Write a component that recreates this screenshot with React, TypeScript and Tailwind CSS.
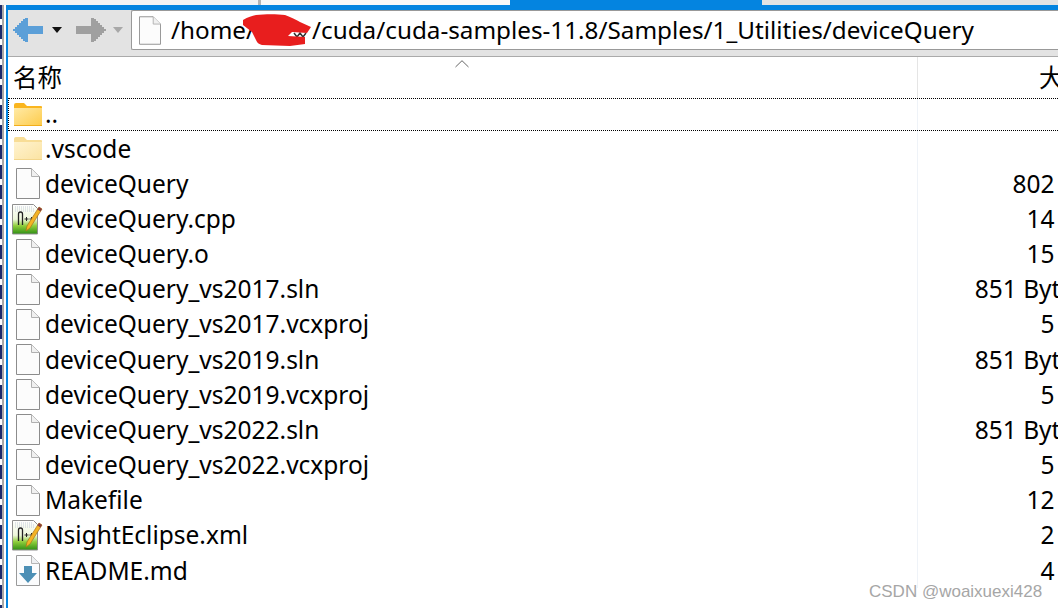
const UI_FONT = "font-['Noto_Sans','Noto_Sans_CJK_SC',sans-serif]";

type Row = { name: string; size?: string; icon: "up" | "folder" | "file" | "npp" | "readme" };

const rows: Row[] = [
  { name: ".vscode", icon: "folder" },
  { name: "deviceQuery", size: "802 KB", icon: "file" },
  { name: "deviceQuery.cpp", size: "14 KB", icon: "npp" },
  { name: "deviceQuery.o", size: "15 KB", icon: "file" },
  { name: "deviceQuery_vs2017.sln", size: "851 Bytes", icon: "file" },
  { name: "deviceQuery_vs2017.vcxproj", size: "5 KB", icon: "file" },
  { name: "deviceQuery_vs2019.sln", size: "851 Bytes", icon: "file" },
  { name: "deviceQuery_vs2019.vcxproj", size: "5 KB", icon: "file" },
  { name: "deviceQuery_vs2022.sln", size: "851 Bytes", icon: "file" },
  { name: "deviceQuery_vs2022.vcxproj", size: "5 KB", icon: "file" },
  { name: "Makefile", size: "12 KB", icon: "file" },
  { name: "NsightEclipse.xml", size: "2 KB", icon: "npp" },
  { name: "README.md", size: "4 KB", icon: "readme" },
];

function PixelArrow({ color, flip }: { color: string; flip?: boolean }) {
  return (
    <svg width="30" height="24" viewBox="0 0 30 24" shapeRendering="crispEdges" className={flip ? "-scale-x-100" : ""}>
      <path
        d="M0 11h2v-2h2v-2h2v-2h2v-2h2v-2h2v-1h3v8h15v8h-15v8h-3v-1h-2v-2h-2v-2h-2v-2h-2v-2h-2v-2h-2z"
        fill={color}
      />
    </svg>
  );
}

function Caret({ color }: { color: string }) {
  return (
    <svg width="10" height="6" viewBox="0 0 10 6">
      <path d="M0 0h10L5 6z" fill={color} />
    </svg>
  );
}

function PageIcon({ small }: { small?: boolean }) {
  return (
    <svg width={small ? 22 : 24} height={small ? 29 : 31} viewBox="0 0 24 31">
      <path d="M.5.5h15l8 8v22H.5z" fill="#fcfcfc" stroke="#8c8c8c" />
      <path d="M15.500.5v8h8" fill="#f0f0f0" stroke="#b0b0b0" />
    </svg>
  );
}

function FolderIcon({ light }: { light?: boolean }) {
  const id = light ? "folderLight" : "folderDark";
  return (
    <svg width="29" height="23" viewBox="0 0 29 23">
      <defs>
        <linearGradient id={id} x1="0" y1="0" x2="1" y2="1">
          <stop offset="0" stopColor={light ? "#fff3cf" : "#ffeaa6"} />
          <stop offset="1" stopColor={light ? "#fbe3a2" : "#fdcb4a"} />
        </linearGradient>
      </defs>
      <path d="M0 2q0-2 2-2h8l3 3h14q1 0 1 1v3H0z" fill={light ? "#f8dd96" : "#fab51e"} />
      <path d="M0 5h28v17q0 1-1 1H1q-1 0-1-1z" fill={`url(#${id})`} />
      <path d="M0 22h28v1H0z" fill={light ? "#f3d68c" : "#f2ae1c"} />
    </svg>
  );
}

function NppIcon() {
  return (
    <svg width="32" height="32" viewBox="0 0 32 32">
      <defs>
        <linearGradient id="nppGreen" x1="0" y1="0" x2="0" y2="1">
          <stop offset="0" stopColor="#ffffff" />
          <stop offset="0.5" stopColor="#eef7dc" />
          <stop offset="0.72" stopColor="#8fce3c" />
          <stop offset="1" stopColor="#2f8f14" />
        </linearGradient>
      </defs>
      <path d="M.5 1.500h21l4 4v25.500H.5z" fill="url(#nppGreen)" stroke="#8f8f8f" />
      <path d="M3 4h18M3 6h20M3 8h20" stroke="#c4ccd8" strokeDasharray="1 1" />
      <path d="M6.500 22v-11q0-2 2-2t2 2v11" fill="none" stroke="#222" strokeWidth="1.300" />
      <path d="M12.500 16h4m-2-2v4M17.500 16h4m-2-2v4" stroke="#222" />
      <path d="M27 4l3 2-12 19-4 3 1-5z" fill="#f4b324" stroke="#a8741a" strokeWidth=".7" />
      <path d="M27 4l3 2-1.500 2.500-3-2z" fill="#8a3d3d" />
    </svg>
  );
}

function ReadmeIcon() {
  return (
    <svg width="24" height="31" viewBox="0 0 24 31">
      <path d="M.5.5h15l8 8v22H.5z" fill="#fbfcfd" stroke="#9a9a9a" />
      <path d="M15.500.5v8h8" fill="#eef0f2" stroke="#b5b5b5" />
      <path d="M8 11h8v7h5l-9 10-9-10h5z" fill="#4c8fb5" />
    </svg>
  );
}

function RowIcon({ icon }: { icon: Row["icon"] }) {
  if (icon === "up") return <FolderIcon />;
  if (icon === "folder") return <FolderIcon light />;
  if (icon === "npp") return <NppIcon />;
  if (icon === "readme") return <ReadmeIcon />;
  return <PageIcon />;
}

function FileRow({ row }: { row: Row }) {
  return (
    <div className="flex h-[35.17px] items-center overflow-hidden">
      <div className="relative flex h-full w-[909px] shrink-0 items-center">
        <div className="flex w-[37px] shrink-0 items-center justify-center pl-[3px]">
          <RowIcon icon={row.icon} />
        </div>
        <span className="whitespace-nowrap pt-[1px]">{row.name}</span>
      </div>
      <div className="h-full w-px shrink-0 bg-[#eff3f8]" />
      {row.size && (
        <div className={`w-[174px] shrink-0 whitespace-nowrap pt-[1px] text-right ${row.size.endsWith("Bytes") ? "pr-[6px]" : ""}`}>
          {row.size}
        </div>
      )}
    </div>
  );
}

export default function App() {
  return (
    <div className={`relative flex h-[608px] w-[1058px] flex-col overflow-hidden bg-white text-[24.5px] text-black ${UI_FONT}`}>
      {/* window behind */}
      <div className="flex h-[5px] shrink-0">
        <div className="w-[258px] bg-[#f4f4f4]" />
        <div className="w-[3px] bg-[#b4b4b4]" />
        <div className="w-[249px] bg-[#f8f8f8]" />
        <div className="w-[252px] bg-[#0484e0]" />
        <div className="flex-1 bg-[#e3e3e3]" />
      </div>

      <div className="flex min-h-0 flex-1">
        <div className="flex w-[6px] shrink-0">
          <div className="w-[2px] bg-[repeating-linear-gradient(#1c2a6b_0_14px,#ffffff_14px_20px)]" />
          <div className="w-[2px] bg-[#a8a8a8]" />
          <div className="w-[2px] bg-white" />
        </div>

        <div className="flex min-w-0 flex-1 flex-col border-t-[5px] border-l-2 border-[#0484e0]">
          {/* toolbar */}
          <div className="flex h-[47px] shrink-0 items-start border-b border-[#aaaaaa] bg-[#e3e3e3]">
            <div className="flex h-[40px] items-center pl-[5px]">
              <PixelArrow color="#5b9fd8" />
              <div className="ml-[9px]"><Caret color="#111111" /></div>
              <div className="ml-[14px]"><PixelArrow color="#a0a0a0" flip /></div>
              <div className="ml-[7px]"><Caret color="#a8a8a8" /></div>
            </div>
            <div className="ml-[8px] flex h-[40px] min-w-0 flex-1 items-center rounded-tl-[2px] rounded-bl-[2px] border border-r-0 border-[#999999] bg-white pl-[7px]">
              <PageIcon small />
              <div className="mt-[1px] ml-[10px] whitespace-nowrap text-[24.25px]">
                /home/<span className="inline-block w-[57px]" />/cuda/cuda-samples-11.8/Samples/1_Utilities/deviceQuery
              </div>
            </div>
          </div>

          {/* header */}
          <div className="relative flex h-[41px] shrink-0">
            <div className="flex w-[909px] items-center pl-[5px] pt-[2px]">名称</div>
            <div className="w-px bg-[#e5e5e5]" />
            <div className="flex flex-1 items-center justify-end pt-[2px]">
              <span className="-mr-[30px]">大小</span>
            </div>
            <svg className="absolute left-[447px] top-[3px]" width="14" height="8" viewBox="0 0 14 8">
              <path d="M.5 7L7 .7 13.500 7" fill="none" stroke="#666666" />
            </svg>
          </div>

          {/* list */}
          <div className="flex h-[33px] shrink-0 border-y border-l border-dotted border-black">
            <div className="flex w-[908px] items-center">
              <div className="-ml-px flex w-[37px] shrink-0 items-center justify-center pl-[3px]"><RowIcon icon="up" /></div>
              <span className="leading-none">..</span>
            </div>
            <div className="w-px bg-[#eff3f8]" />
          </div>
          <div className="min-h-0 flex-1">
            {rows.map((row) => (
              <FileRow key={row.name} row={row} />
            ))}
          </div>
        </div>
      </div>

      {/* redacted user name */}
      <svg className="absolute left-[243px] top-[14px]" width="70" height="34" viewBox="0 0 70 34">
        <path d="M51 19l3 4 3-4 3 4 3-4" fill="none" stroke="#333333" strokeWidth="1.500" />
        <path
          d="M0 6C5 3 9 2 13 1 22 0 34 0 42 1 48 3 53 6 57 8L68 13 64 19 49 18 45 22 62 23 62 30 47 32 19 31C15 30 14 28 13 26L9 18 0 11z"
          fill="#e81e1e"
        />
      </svg>

      <div className="absolute left-[869px] top-[582px] whitespace-nowrap font-['Liberation_Sans',sans-serif] text-[17px] leading-[20px] text-[#a6a6a6]">
        CSDN @woaixuexi428
      </div>
    </div>
  );
}
